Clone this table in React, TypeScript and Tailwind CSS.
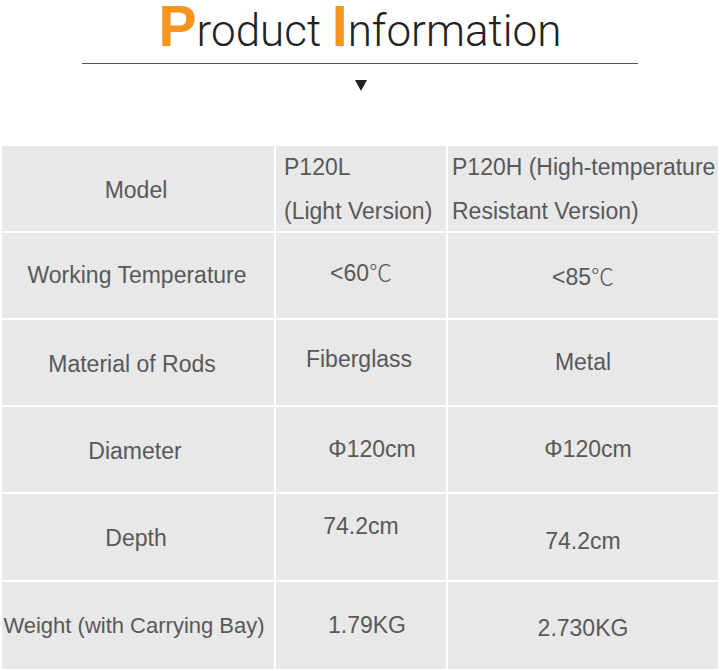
const font = { fontFamily: '"Liberation Sans", Arial, sans-serif' };

type Cell = { text: string[]; cls: string };

const rows: { h: string; cells: Cell[] }[] = [
  {
    h: 'h-[85px]',
    cells: [
      { text: ['Model'], cls: 'justify-center items-center pt-[3px] pr-[4px]' },
      { text: ['P120L', '(Light Version)'], cls: 'justify-start items-center pl-[8px] leading-[44px]' },
      { text: ['P120H (High-temperature', 'Resistant Version)'], cls: 'justify-start items-center pl-[4px] leading-[44px]' },
    ],
  },
  {
    h: 'h-[85px]',
    cells: [
      { text: ['Working Temperature'], cls: 'justify-center items-center pr-[2px]' },
      { text: ['<60', '℃'], cls: 'justify-center items-center pb-[6px]' },
      { text: ['<85', '℃'], cls: 'justify-center items-center pt-[2px]' },
    ],
  },
  {
    h: 'h-[85px]',
    cells: [
      { text: ['Material of Rods'], cls: 'justify-center items-center pt-[4px] pr-[12px]' },
      { text: ['Fiberglass'], cls: 'justify-center items-center pb-[6px] pr-[4px]' },
      { text: ['Metal'], cls: 'justify-center items-center' },
    ],
  },
  {
    h: 'h-[85px]',
    cells: [
      { text: ['Diameter'], cls: 'justify-center items-center pt-[4px] pr-[6px]' },
      { text: ['Φ120cm'], cls: 'justify-center items-center pl-[22px]' },
      { text: ['Φ120cm'], cls: 'justify-center items-center pl-[10px]' },
    ],
  },
  {
    h: 'h-[86px]',
    cells: [
      { text: ['Depth'], cls: 'justify-center items-center pt-[2px] pr-[4px]' },
      { text: ['74.2cm'], cls: 'justify-center items-center pb-[22px]' },
      { text: ['74.2cm'], cls: 'justify-center items-center pt-[8px]' },
    ],
  },
  {
    h: 'h-[87px]',
    cells: [
      { text: ['Weight (with Carrying Bay)'], cls: 'justify-center items-center text-[22px] pr-[8px]' },
      { text: ['1.79KG'], cls: 'justify-center items-center pl-[12px]' },
      { text: ['2.730KG'], cls: 'justify-center items-center pt-[6px]' },
    ],
  },
];

function CellText({ text }: { text: string[] }) {
  // two-part entries are a value plus the ℃ sign, which the source sets in a lighter face
  if (text.length === 2 && text[1] === '℃') {
    return (
      <div className="whitespace-nowrap">
        {text[0]}
        <span className="font-light" style={{ fontFamily: '"Noto Sans CJK SC", sans-serif' }}>
          {text[1]}
        </span>
      </div>
    );
  }
  return (
    <div>
      {text.map((t, i) => (
        <div key={i} className="whitespace-nowrap">
          {t}
        </div>
      ))}
    </div>
  );
}

const initialFont = { fontFamily: '"Liberation Sans Narrow", "Liberation Sans", sans-serif' };
const restFont = { fontFamily: 'Roboto, "Liberation Sans", sans-serif' };

export default function App() {
  return (
    <div className="w-[720px] h-[671px] bg-white overflow-hidden" style={font}>
      <div className="h-[63px] flex items-start justify-center pt-[1px]">
        <h1 className="flex items-baseline text-[#222] leading-[0.9]">
          <span className="text-[57px] font-bold text-[#f7941d]" style={initialFont}>
            P
          </span>
          <span className="text-[44px] font-light" style={restFont}>
            roduct&nbsp;
          </span>
          <span className="text-[57px] font-bold text-[#f7941d]" style={initialFont}>
            I
          </span>
          <span className="text-[44px] font-light" style={restFont}>
            nformation
          </span>
        </h1>
      </div>
      <div className="mx-[82px] h-px bg-[#555]" />
      <div className="flex justify-center pt-[16px] pl-[2px]">
        <svg width="12" height="11" viewBox="0 0 12 11">
          <path d="M0 0 H12 L6 11 Z" fill="#222" />
        </svg>
      </div>
      <div className="mt-[55px] grid grid-cols-[272px_170px_270px] gap-[2px] px-[2px] text-[23px] text-[#585858]">
        {rows.map((row, r) =>
          row.cells.map((cell, c) => (
            <div key={`${r}-${c}`} className={`${row.h} bg-[#e8e8e8] flex ${cell.cls}`}>
              <CellText text={cell.text} />
            </div>
          ))
        )}
      </div>
    </div>
  );
}
